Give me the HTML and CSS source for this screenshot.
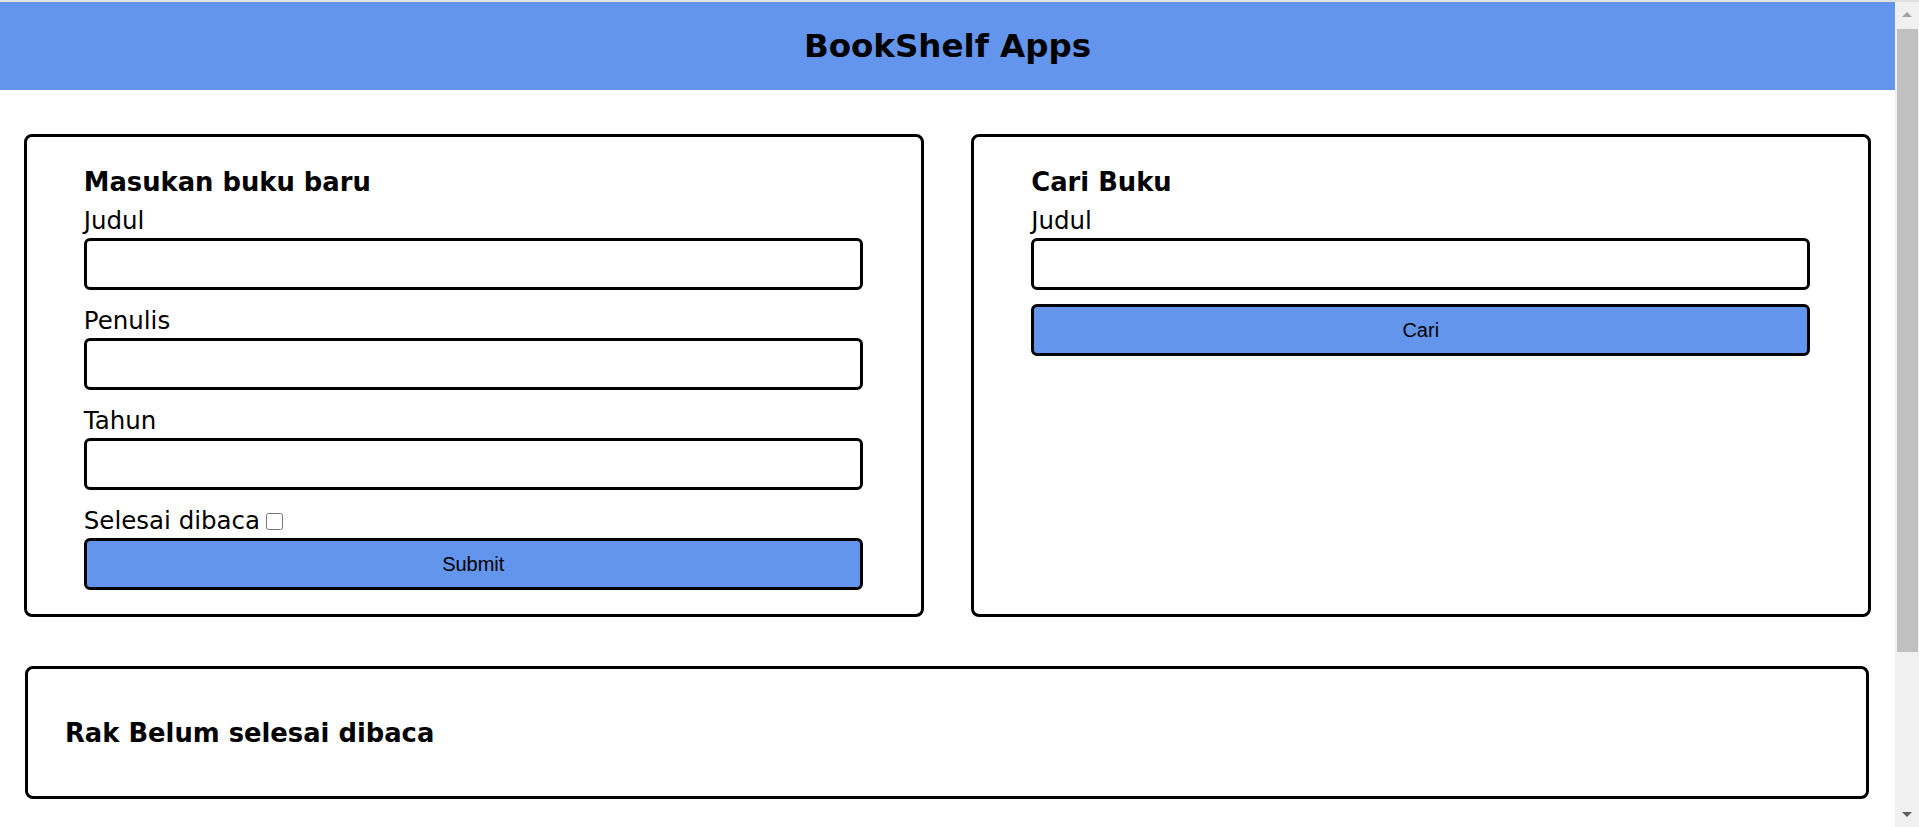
FILE: index.html
```html
<!DOCTYPE html>
<html lang="id">
<head>
    <meta charset="UTF-8" />
    <meta name="viewport" content="width=device-width, initial-scale=1.0" />
    <title>BookShelf Apps</title>
    <link rel="stylesheet" href="styles.css">
</head>
<body>
    <div class="page">
        <header class="app-header">
            <h1>BookShelf Apps</h1>
        </header>
        <main>
            <div class="input-row">
                <section class="card input-section">
                    <h2>Masukan buku baru</h2>
                    <form id="inputBook">
                        <label for="inputBookTitle">Judul</label>
                        <input id="inputBookTitle" type="text" class="text-input" required />
                        <label for="inputBookAuthor">Penulis</label>
                        <input id="inputBookAuthor" type="text" class="text-input" required />
                        <label for="inputBookYear">Tahun</label>
                        <input id="inputBookYear" type="number" class="text-input" required />
                        <div class="check-row">
                            <label for="inputBookIsComplete">Selesai dibaca</label>
                            <input id="inputBookIsComplete" type="checkbox" />
                        </div>
                        <button id="bookSubmit" type="submit">Submit</button>
                    </form>
                </section>
                <section class="card search-section">
                    <h2>Cari Buku</h2>
                    <form id="searchBook">
                        <label for="searchBookTitle">Judul</label>
                        <input id="searchBookTitle" type="text" class="text-input" />
                        <button id="searchSubmit" type="submit">Cari</button>
                    </form>
                </section>
            </div>
            <section class="card book-shelf">
                <h2>Rak Belum selesai dibaca</h2>
                <div id="incompleteBookshelfList" class="book-list"></div>
            </section>
        </main>
    </div>
    <div class="scrollbar" aria-hidden="true">
        <span class="scroll-arrow scroll-arrow--up"></span>
        <span class="scroll-track"><span class="scroll-thumb"></span></span>
        <span class="scroll-arrow scroll-arrow--down"></span>
    </div>
</body>
</html>
```

FILE: styles.css
```css
* {
    box-sizing: border-box;
}
html, body {
    margin: 0;
    padding: 0;
}
body {
    display: flex;
    height: 100vh;
    overflow: hidden;
    border-top: 2px solid #e1e1e1;
    font-family: "DejaVu Sans", sans-serif;
    color: #000;
    background-color: #fff;
}
.page {
    flex: 1;
    min-width: 0;
}
.app-header {
    display: flex;
    align-items: center;
    justify-content: center;
    height: 88px;
    background-color: #6495ed;
}
.app-header h1 {
    margin: 0;
    font-size: 32.5px;
    line-height: 1;
}
.input-row {
    display: flex;
    justify-content: space-around;
    padding-top: 44px;
}
.card {
    border: 3px solid #000;
    border-radius: 8px;
    background-color: #fff;
}
.input-row .card {
    width: 900px;
    padding: 29px 58px 24px 57px;
}
h2 {
    margin: 0 0 6px;
    font-size: 25.8px;
    line-height: 32px;
}
label {
    display: block;
    font-size: 24.5px;
    line-height: 34px;
}
.text-input {
    display: block;
    width: 100%;
    height: 52px;
    margin: 0 0 14px;
    padding: 0 12px;
    border: 3px solid #000;
    border-radius: 6px;
    font-size: 18px;
}
.text-input::-webkit-outer-spin-button,
.text-input::-webkit-inner-spin-button {
    -webkit-appearance: none;
    margin: 0;
}
.check-row {
    display: flex;
    align-items: center;
    height: 34px;
}
.check-row label {
    display: inline;
}
input[type="checkbox"] {
    width: 17px;
    height: 17px;
    margin: 0 0 0 6px;
}
button {
    display: block;
    width: 100%;
    height: 52px;
    border: 3px solid #000;
    border-radius: 6px;
    background-color: #6495ed;
    color: #000;
    font-family: "Liberation Sans", Arial, sans-serif;
    font-size: 20px;
    cursor: pointer;
}
.book-shelf {
    margin: 49px 26px 0 25px;
    padding: 47.5px 37px;
}
.book-shelf h2 {
    margin: 0;
}
/* window scrollbar as seen in the screenshot */
.scrollbar {
    display: flex;
    flex-direction: column;
    flex: none;
    width: 24px;
    background-color: #f0f0f0;
}
.scroll-arrow {
    display: flex;
    align-items: center;
    justify-content: center;
    flex: none;
    height: 25px;
}
.scroll-arrow::before {
    content: "";
    border-left: 5px solid transparent;
    border-right: 5px solid transparent;
}
.scroll-arrow--up::before {
    border-bottom: 5px solid #a3a3a3;
}
.scroll-arrow--down::before {
    border-top: 5px solid #5f5f5f;
}
.scroll-track {
    flex: 1;
    padding: 2px 1px 0 2px;
}
.scroll-thumb {
    display: block;
    height: 623px;
    background-color: #c0c0c0;
}
```
